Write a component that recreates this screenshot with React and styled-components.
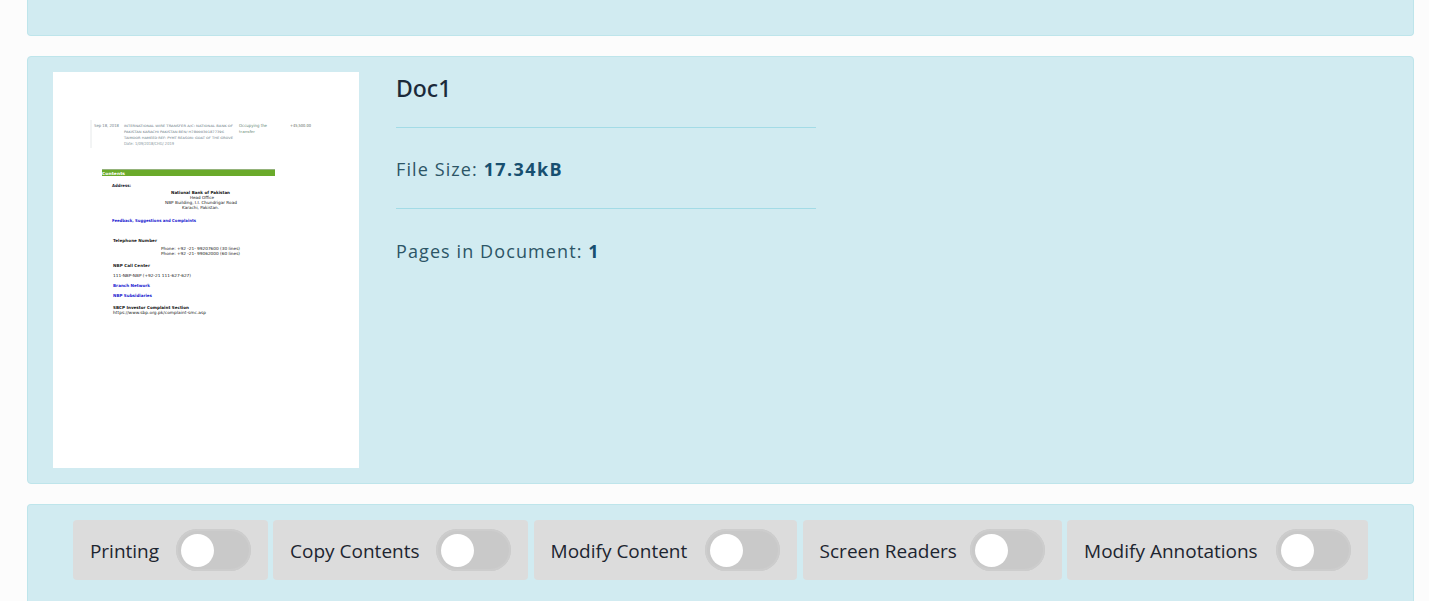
import styled, { createGlobalStyle } from "styled-components";

const GlobalStyle = createGlobalStyle`
  html, body {
    margin: 0;
    padding: 0;
    height: 601px;
    overflow: hidden;
    background: #fcfcfc;
  }
`;

const Page = styled.div`
  box-sizing: border-box;
  height: 601px;
  padding: 0 15px 0 27px;
  display: flex;
  flex-direction: column;
  gap: 20px;
  font-family: "Open Sans", "Noto Sans", sans-serif;
`;

const Panel = styled.section`
  box-sizing: border-box;
  background: #d1ebf1;
  border: 1px solid #bee5eb;
  border-radius: 4px;
`;

const TopPanel = styled(Panel)`
  height: 36px;
  border-top: 0;
  border-radius: 0 0 4px 4px;
`;

const DocPanel = styled(Panel)`
  height: 428px;
  padding: 15px 25px;
  display: flex;
  gap: 37px;
`;

const Thumbnail = styled.svg`
  display: block;
  flex: none;
  width: 306px;
  height: 396px;
  background: #fff;
`;

const Info = styled.div`
  width: 420px;
  display: flex;
  flex-direction: column;
`;

const Title = styled.h2`
  margin: 0;
  height: 55px;
  font-family: "Noto Sans", "Open Sans", sans-serif;
  font-size: 23px;
  font-weight: 500;
  line-height: 32px;
  color: #1b2a3a;
`;

const Rule = styled.hr`
  width: 100%;
  margin: 0;
  border: 0;
  border-top: 1px solid #a3dbe6;
`;

const Stat = styled.p`
  margin: 0;
  height: 80px;
  padding-top: 28px;
  box-sizing: border-box;
  font-size: 18px;
  line-height: 26px;
  letter-spacing: 1.1px;
  color: #2c5566;

  b {
    font-weight: 700;
    letter-spacing: 1.4px;
    color: #174f70;
  }

  & ~ & {
    padding-top: 29px;
  }
`;

const TogglePanel = styled(Panel)`
  height: 97px;
  border-bottom: 0;
  border-radius: 4px 4px 0 0;
  padding-top: 15px;
  display: flex;
  justify-content: center;
  gap: 5.5px;
`;

const ToggleItem = styled.label`
  box-sizing: border-box;
  width: ${(p) => p.$width}px;
  height: 60px;
  padding: 0 17px;
  display: flex;
  align-items: center;
  justify-content: space-between;
  background: #dcdcdc;
  border-radius: 4px;
  font-size: 19px;
  color: #1d2530;
  white-space: nowrap;
`;

const ToggleText = styled.span`
  padding-top: 2px;
`;

const Track = styled.span`
  box-sizing: border-box;
  flex: none;
  width: 75px;
  height: 42px;
  padding: 5px;
  background: #c9c9c9;
  border-radius: 21px;
  box-shadow: inset 0 0 0 2px #cdcdcd;
  display: flex;
  align-items: center;
`;

const Knob = styled.span`
  width: 33px;
  height: 33px;
  background: #fff;
  border-radius: 50%;
`;

const permissions = [
  { label: "Printing", width: 194.7 },
  { label: "Copy Contents", width: 255 },
  { label: "Modify Content", width: 263.5 },
  { label: "Screen Readers", width: 259 },
  { label: "Modify Annotations", width: 301 },
];

// mini page preview, the text is tiny on purpose
const previewLines = [
  { x: 94, y: 126.5, w: 25, t: "Sep 18, 2018", c: "#75868d" },
  { x: 124, y: 126.5, w: 109, s: 3.2, t: "INTERNATIONAL WIRE TRANSFER A/C: NATIONAL BANK OF", c: "#67787f" },
  { x: 124, y: 132.5, w: 100, s: 3.2, t: "PAKISTAN KARACHI PAKISTAN BEN/ H78000301877396", c: "#67787f" },
  { x: 124, y: 138.5, w: 109, s: 3.2, t: "TAIMOOR HAMEED REF: PYMT REASON: GOAT OF THE GROVE", c: "#67787f" },
  { x: 124, y: 144.5, w: 50, t: "Date: 1/09/2018/CHG/ 2019", c: "#8a979d" },
  { x: 239, y: 126.5, w: 28, t: "Occupying the", c: "#6b8a78" },
  { x: 239, y: 132.5, w: 16, s: 3.8, t: "transfer", c: "#6b8a78" },
  { x: 290, y: 126.5, w: 21, t: "+45,500.00", c: "#5a6a5a" },
  { x: 102, y: 174.5, w: 23, t: "Contents", c: "#fff", b: 1 },
  { x: 112, y: 186.5, w: 19, t: "Address:", c: "#223", b: 1 },
  { x: 171, y: 193.5, w: 59, t: "National Bank of Pakistan", c: "#111", b: 1 },
  { x: 190, y: 198.5, w: 24, t: "Head Office", c: "#222" },
  { x: 165, y: 203.5, w: 72, t: "NBP Building, I.I. Chundrigar Road", c: "#222" },
  { x: 182, y: 208.5, w: 37, t: "Karachi, Pakistan.", c: "#222" },
  { x: 112, y: 221.5, w: 84, t: "Feedback, Suggestions and Complaints", c: "#1a1ad0", b: 1 },
  { x: 113, y: 241.5, w: 44, t: "Telephone Number", c: "#222", b: 1 },
  { x: 161, y: 249.5, w: 79, t: "Phone: +92 -21- 99207600 (30 lines)", c: "#222" },
  { x: 161, y: 254.5, w: 79, t: "Phone: +92 -21- 99062000 (60 lines)", c: "#222" },
  { x: 113, y: 266.5, w: 37, t: "NBP Call Center", c: "#222", b: 1 },
  { x: 113, y: 276.5, w: 78, t: "111-NBP-NBP (+92-21 111-627-627)", c: "#222" },
  { x: 113, y: 286.5, w: 37, t: "Branch Network", c: "#1a1ad0", b: 1 },
  { x: 113, y: 296.5, w: 39, t: "NBP Subsidiaries", c: "#1a1ad0", b: 1 },
  { x: 113, y: 308.5, w: 76, t: "SBCP Investor Complaint Section", c: "#111", b: 1 },
  { x: 113, y: 313.5, w: 93, t: "https://www.sbp.org.pk/complaint-smc.asp", c: "#222" },
];

function DocPreview() {
  // coordinates below are taken in page space, so shift by the thumbnail origin
  return (
    <Thumbnail viewBox="53 72 306 396">
      <rect x="53" y="72" width="306" height="396" fill="#fff" />
      <line x1="91" y1="120" x2="91" y2="148" stroke="#e6e9ea" strokeWidth="1" />
      <rect x="102" y="169" width="173" height="7" fill="#6aaa2a" />
      <rect x="102" y="169" width="173" height="0.7" fill="#a8b8a0" />
      {previewLines.map((line) => (
        <text
          key={line.t}
          x={line.x}
          y={line.y}
          fill={line.c}
          fontFamily="'DejaVu Sans', sans-serif"
          fontSize={line.s || 4.2}
          fontWeight={line.b ? 700 : 400}
          textLength={line.w}
          lengthAdjust="spacingAndGlyphs"
        >
          {line.t}
        </text>
      ))}
    </Thumbnail>
  );
}

export default function App() {
  return (
    <Page>
      <GlobalStyle />
      <TopPanel />
      <DocPanel>
        <DocPreview />
        <Info>
          <Title>Doc1</Title>
          <Rule />
          <Stat>
            File Size: <b>17.34kB</b>
          </Stat>
          <Rule />
          <Stat>
            Pages in Document: <b>1</b>
          </Stat>
        </Info>
      </DocPanel>
      <TogglePanel>
        {permissions.map((item) => (
          <ToggleItem key={item.label} $width={item.width}>
            <ToggleText>{item.label}</ToggleText>
            <Track>
              <Knob />
            </Track>
          </ToggleItem>
        ))}
      </TogglePanel>
    </Page>
  );
}
